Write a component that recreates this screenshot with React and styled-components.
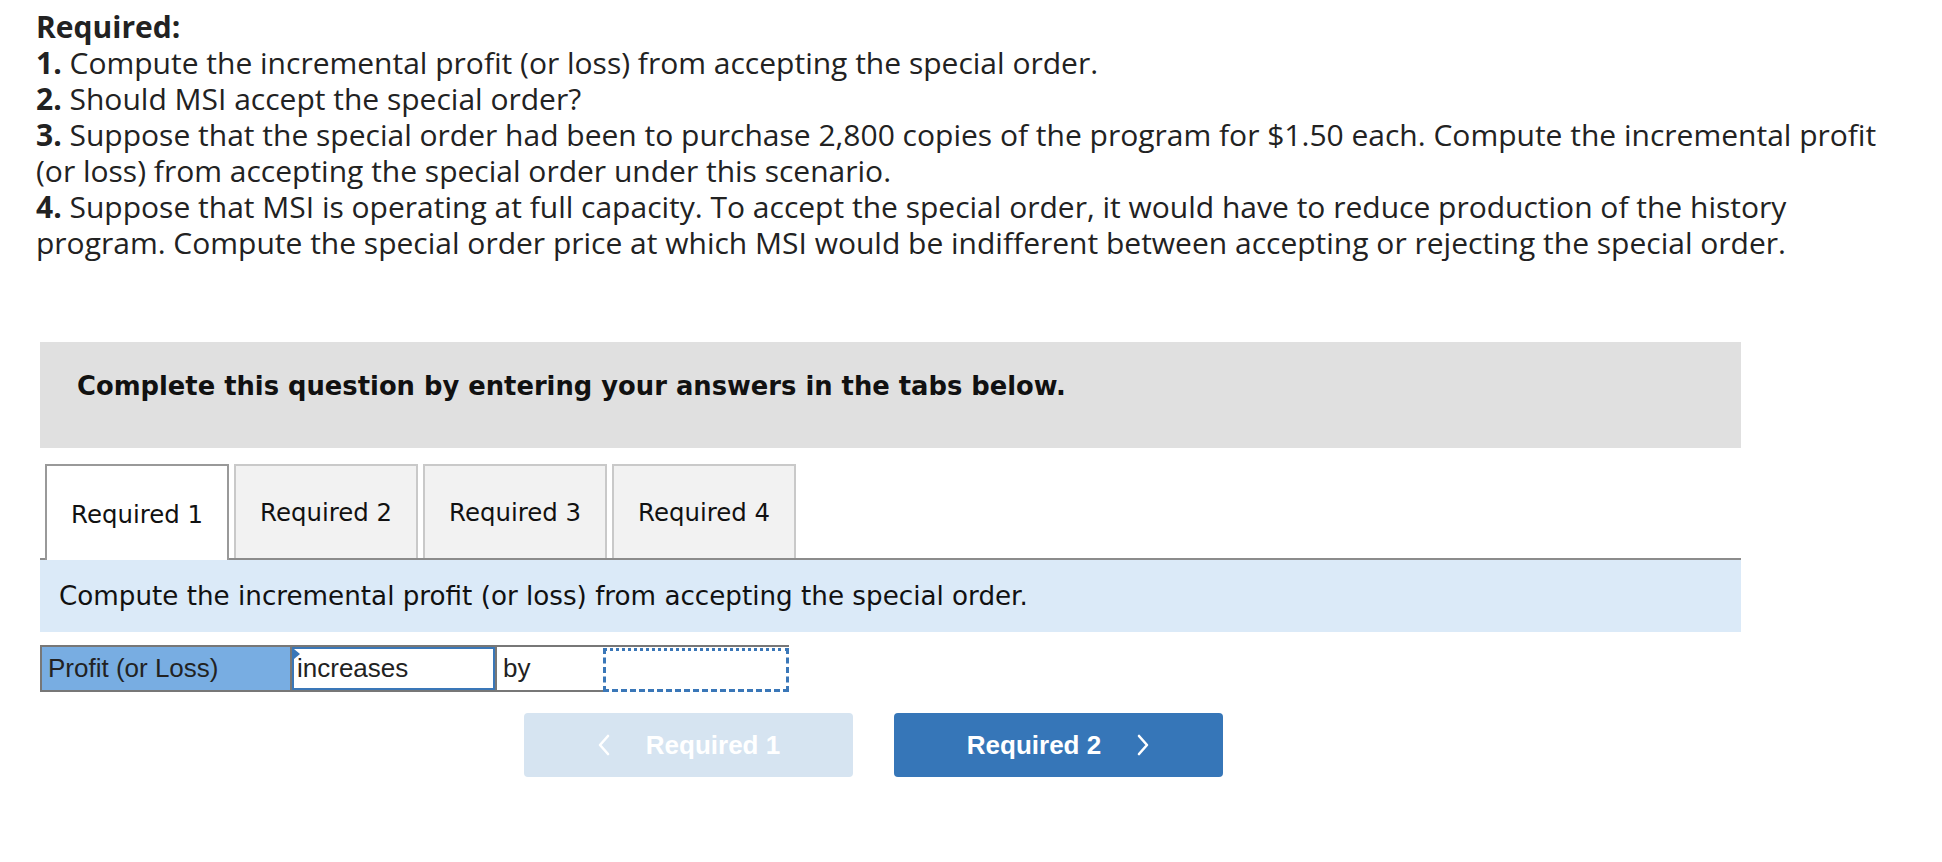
import React from 'react';
import styled, { createGlobalStyle } from 'styled-components';

const GlobalStyle = createGlobalStyle`
  * { box-sizing: border-box; }
  body {
    margin: 0;
    background: #ffffff;
    font-family: 'Open Sans', 'Liberation Sans', sans-serif;
    color: #222222;
  }
`;

const Page = styled.div`
  padding: 9px 0 40px 36px;
`;

const Instructions = styled.div`
  font-family: 'Open Sans', 'Liberation Sans', sans-serif;
  font-size: 30px;
  line-height: 36px;
  color: #222222;
  white-space: nowrap;
`;

const Heading = styled.div`
  font-weight: 700;
`;

const Item = styled.div`
  b {
    font-weight: 700;
  }
`;

const Panel = styled.div`
  width: 1701px;
  margin: 81px 0 0 4px;
`;

const Banner = styled.div`
  height: 106px;
  background: #e0e0e0;
  padding: 30px 0 0 37px;
  font-family: 'DejaVu Sans', Verdana, sans-serif;
  font-size: 25.8px;
  line-height: 28px;
  font-weight: 700;
  color: #111111;
`;

const TabList = styled.div`
  display: flex;
  gap: 5px;
  margin-top: 16px;
  padding-left: 5px;
  border-bottom: 2px solid #8c8c8c;
`;

const Tab = styled.div`
  width: 184px;
  height: ${p => (p.active ? '96px' : '94px')};
  margin-bottom: ${p => (p.active ? '-2px' : '0')};
  display: flex;
  align-items: center;
  justify-content: center;
  background: ${p => (p.active ? '#ffffff' : '#f2f2f2')};
  border: 2px solid ${p => (p.active ? '#999999' : '#c9c9c9')};
  border-bottom: ${p => (p.active ? 'none' : '0')};
  padding-top: ${p => (p.active ? '2px' : '0')};
  font-family: 'DejaVu Sans', Verdana, sans-serif;
  font-size: 24.4px;
  color: #111111;
`;

const Prompt = styled.div`
  height: 72px;
  background: #dbeaf8;
  display: flex;
  align-items: center;
  padding-left: 19px;
  font-family: 'DejaVu Sans', Verdana, sans-serif;
  font-size: 26.2px;
  color: #111111;
`;

const AnswerRow = styled.div`
  display: flex;
  width: 749px;
  height: 47px;
  margin-top: 13px;
  border: 2px solid #777777;
  border-right: none;
  font-family: 'Liberation Sans', Arial, sans-serif;
  font-size: 26px;
  color: #222222;
`;

const LabelCell = styled.div`
  width: 250px;
  background: #78ade2;
  border-right: 2px solid #777777;
  display: flex;
  align-items: center;
  padding-left: 6px;
`;

const SelectCell = styled.div`
  position: relative;
  width: 203px;
  border: 2px solid #3a77b8;
  display: flex;
  align-items: center;
  padding-left: 3px;

  &::before {
    content: '';
    position: absolute;
    top: 0;
    left: 0;
    border-top: 5px solid transparent;
    border-bottom: 5px solid transparent;
    border-left: 6px solid #3a77b8;
  }
`;

const TextCell = styled.div`
  width: 108px;
  border-left: 2px solid #777777;
  display: flex;
  align-items: center;
  padding-left: 6px;
`;

const InputCell = styled.div`
  width: 186px;
  margin: 1px 0 -2px 0;
  background: #ffffff;
  border: 3px dashed #3a77b8;
  border-top-style: dotted;
`;

const NavRow = styled.div`
  display: flex;
  gap: 41px;
  margin-top: 21px;
  padding-left: 484px;
`;

const NavButton = styled.div`
  width: 329px;
  height: 64px;
  border-radius: 4px;
  background: ${p => (p.disabled ? '#d6e4f1' : '#3676b8')};
  color: #ffffff;
  display: flex;
  align-items: center;
  justify-content: center;
  gap: 35px;
  font-family: 'Liberation Sans', Arial, sans-serif;
  font-size: 26px;
  font-weight: 700;
`;

const Chevron = ({ dir }) => (
  <svg width="14" height="24" viewBox="0 0 14 24" fill="none">
    <polyline
      points={dir === 'left' ? '11,3 3,12 11,21' : '3,3 11,12 3,21'}
      stroke="#ffffff"
      strokeWidth="2.6"
      strokeLinecap="round"
      strokeLinejoin="round"
    />
  </svg>
);

const tabs = ['Required 1', 'Required 2', 'Required 3', 'Required 4'];

export default function App() {
  return (
    <Page>
      <GlobalStyle />
      <Instructions>
        <Heading>Required:</Heading>
        <Item><b>1.</b> Compute the incremental profit (or loss) from accepting the special order.</Item>
        <Item><b>2.</b> Should MSI accept the special order?</Item>
        <Item>
          <b>3.</b> Suppose that the special order had been to purchase 2,800 copies of the program for $1.50 each. Compute the incremental profit
          <br />
          (or loss) from accepting the special order under this scenario.
        </Item>
        <Item>
          <b>4.</b> Suppose that MSI is operating at full capacity. To accept the special order, it would have to reduce production of the history
          <br />
          program. Compute the special order price at which MSI would be indifferent between accepting or rejecting the special order.
        </Item>
      </Instructions>

      <Panel>
        <Banner>Complete this question by entering your answers in the tabs below.</Banner>

        <TabList>
          {tabs.map((t, i) => (
            <Tab key={t} active={i === 0}>{t}</Tab>
          ))}
        </TabList>

        <Prompt>Compute the incremental profit (or loss) from accepting the special order.</Prompt>

        <AnswerRow>
          <LabelCell>Profit (or Loss)</LabelCell>
          <SelectCell>increases</SelectCell>
          <TextCell>by</TextCell>
          <InputCell />
        </AnswerRow>

        <NavRow>
          <NavButton disabled>
            <Chevron dir="left" />
            <span>Required 1</span>
          </NavButton>
          <NavButton>
            <span>Required 2</span>
            <Chevron dir="right" />
          </NavButton>
        </NavRow>
      </Panel>
    </Page>
  );
}
